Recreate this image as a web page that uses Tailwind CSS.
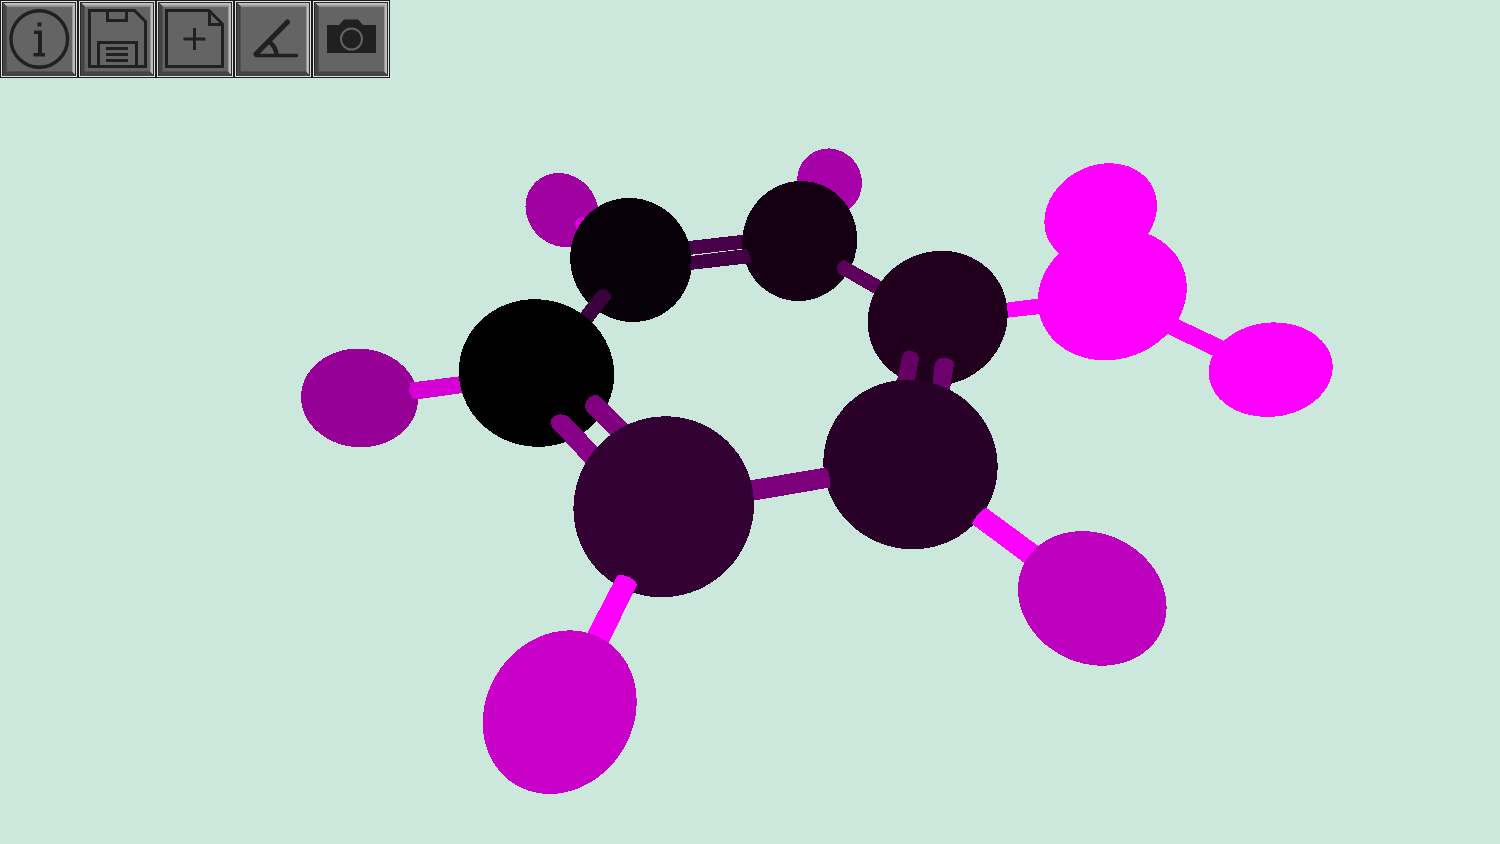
<!DOCTYPE html>
<html lang="en">
<head>
<meta charset="utf-8">
<meta name="viewport" content="width=device-width, initial-scale=1">
<title>Molecule viewer</title>
<script src="https://cdn.jsdelivr.net/npm/@tailwindcss/browser@4"></script>
</head>
<body class="bg-[#cce8dc] font-['Liberation_Sans',sans-serif]">
<main class="relative h-screen w-full overflow-hidden">
  <svg class="block h-full w-full" viewBox="0 0 1500 844" role="img" aria-label="Ball and stick model of a molecule" shape-rendering="crispEdges">
    <!-- back hydrogens -->
    <circle r="1" transform="matrix(36.5 3.5 0 36.8 562 210)" fill="#a000a0"/>
    <path d="M582 217l-5 2-2 4 1 6 8 3V217z" fill="#dc00dc"/>
    <circle r="1" transform="matrix(32.5 1 0 33.5 829.5 182)" fill="#a800a8"/>
    <!-- upper ring -->
    <path d="M680 242L750 234V248L680 256z" fill="#480048"/>
    <circle r="1" transform="matrix(60.8 2 0 62 631 260)" fill="#080008"/>
    <circle r="1" transform="matrix(57.5 -1.5 0 60 799.7 241)" fill="#140012"/>
    <path d="M691 256L746 249Q750 252 751 263L690 270z" fill="#440044"/>
    <path d="M837 268Q838 261 844 260L892 287L885 300L840 274Q837 272 837 268z" fill="#5c005c"/>
    <path d="M574 321L597 292Q601 288 606 290Q612 293 611 298L587 329z" fill="#3c003c"/>
    <!-- left arm -->
    <circle r="1" transform="matrix(58.5 1.1 0 49.3 359.5 398)" fill="#960096"/>
    <path d="M410 384Q411 382 415 382L470 375V392L416 399.5Q411 399 409 390z" fill="#d400d4"/>
    <circle r="1" transform="matrix(77.7 1.5 0 73.8 536.5 373)" fill="#000"/>
    <path d="M551 422Q551 417 557 415Q564 413 569 417L606 456L590 468L552 427z" fill="#880088"/>
    <path d="M585 407Q585 401 590 397Q596 393 600 397L640 437L625 450L587 412z" fill="#800080"/>
    <!-- right arm -->
    <path d="M1000 303.5L1050 297V313L1000 318.5z" fill="#f0f"/>
    <circle r="1" transform="matrix(70 -3.8 0 67.4 937.7 318.3)" fill="#20001c"/>
    <path d="M902 357Q904 350 910 350.5Q918 352 919 358L913 390H895z" fill="#640064"/>
    <path d="M935 363Q938 357 946 358Q954 360 954 364L949 395H931z" fill="#6c006c"/>
    <circle r="1" transform="matrix(56.3 -8 0 49.9 1100.7 213.8)" fill="#f0f"/>
    <circle r="1" transform="matrix(74.5 -6.5 0 65.5 1112.3 294.5)" fill="#f0f"/>
    <path d="M1165 313L1235 346L1222 360L1155 328z" fill="#f0f"/>
    <circle r="1" transform="matrix(62 -2.7 0 47.2 1270.7 369.7)" fill="#f0f"/>
    <!-- lower ring -->
    <circle r="1" transform="matrix(87.2 2.3 0 84.8 910.5 464.5)" fill="#280028"/>
    <path d="M740 482L826 467.5Q831 476 830 487.500L740 503z" fill="#7c007c"/>
    <circle r="1" transform="matrix(90.3 -2 0 90.5 663.7 506.8)" fill="#330033"/>
    <!-- front hydrogens -->
    <path d="M986 507.5L1060 562L1042 576L972 524Q976 514 986 507.5z" fill="#f0f"/>
    <circle r="1" transform="matrix(74.3 9 0 66.7 1092.3 598.4)" fill="#bd00bd"/>
    <path d="M617 576Q619 574 626 576Q635 579 637 585L605 650L580 647z" fill="#f0f"/>
    <circle r="1" transform="matrix(77 -10.6 0 81.1 559.7 712.2)" fill="#c800c8"/>
  </svg>

  <svg class="hidden" aria-hidden="true">
    <symbol id="bevel" viewBox="0 0 78 78">
      <path d="M0 0h78v78H0z" fill="#1c1c1c"/>
      <path d="M1 1h76v76H1z" fill="#e6dee6"/>
      <path d="M2 2h74v74H2z" fill="#2a2a2a"/>
      <path d="M3 3h72v72H3z" fill="#bdbdbd"/>
      <path d="M3 3L7 7V71H71L75 75V76H3z" fill="#444"/>
      <path d="M5 5H73V73L71 71V7H7z" fill="#969696"/>
      <path d="M6 6L8 8V70H70L72 72H6z" fill="#505050"/>
      <path d="M7 7H72V71H7z" fill="#646464"/>
    </symbol>
  </svg>

  <nav aria-label="Tools" class="absolute top-0 left-0 flex">
    <button type="button" aria-label="Information" class="size-[78px]">
      <svg class="block size-full" viewBox="0 0 78 78" fill="none" stroke="#202020">
        <use href="#bevel" stroke="none" shape-rendering="crispEdges"/>
        <circle cx="39.3" cy="39" r="28.3" stroke-width="3.4"/>
        <path d="M37.500 22.500h4v4h-4zM34 30.500h8V53h3v3.500H33.500V53h4.500V34h-4z" fill="#202020" stroke="none"/>
      </svg>
    </button>
    <button type="button" aria-label="Save" class="size-[78px]">
      <svg class="block size-full" viewBox="0 0 78 78" fill="none" stroke="#202020" stroke-width="3">
        <use href="#bevel" stroke="none" shape-rendering="crispEdges"/>
        <path d="M11.500 10.500H56.500L67.500 21.500V66.500H11.500zM29.500 10.500V20.500H48.500V10.500M20.500 66.500V42.500H58.500V66.500M28 48.500H50M28 54.500H50M28 60.500H50"/>
      </svg>
    </button>
    <button type="button" aria-label="New file" class="size-[78px]">
      <svg class="block size-full" viewBox="0 0 78 78" fill="none" stroke="#202020" stroke-width="3">
        <use href="#bevel" stroke="none" shape-rendering="crispEdges"/>
        <path d="M10.500 10.500H53L66.500 24V66.500H10.500zM53.500 10.500V24.500H66.500M38.500 28V50M27.500 39H49.500"/>
      </svg>
    </button>
    <button type="button" aria-label="Measure angle" class="size-[78px]">
      <svg class="block size-full" viewBox="0 0 78 78" fill="none" stroke="#202020">
        <use href="#bevel" stroke="none" shape-rendering="crispEdges"/>
        <path d="M53.500 22L22 54" stroke-width="5" stroke-linecap="round"/>
        <path d="M22 55.500H62.500" stroke-width="3.4" stroke-linecap="round"/>
        <path d="M35 41.500Q42 47 42.500 55" stroke-width="4.4"/>
      </svg>
    </button>
    <button type="button" aria-label="Take screenshot" class="size-[78px]">
      <svg class="block size-full" viewBox="0 0 78 78" fill="none">
        <use href="#bevel" shape-rendering="crispEdges"/>
        <path d="M15 25H27L32 19.500H46L51 25H64V53H15z" fill="#202020"/>
        <circle cx="39.500" cy="39" r="10.500" stroke="#646464" stroke-width="2"/>
      </svg>
    </button>
  </nav>
</main>
</body>
</html>
